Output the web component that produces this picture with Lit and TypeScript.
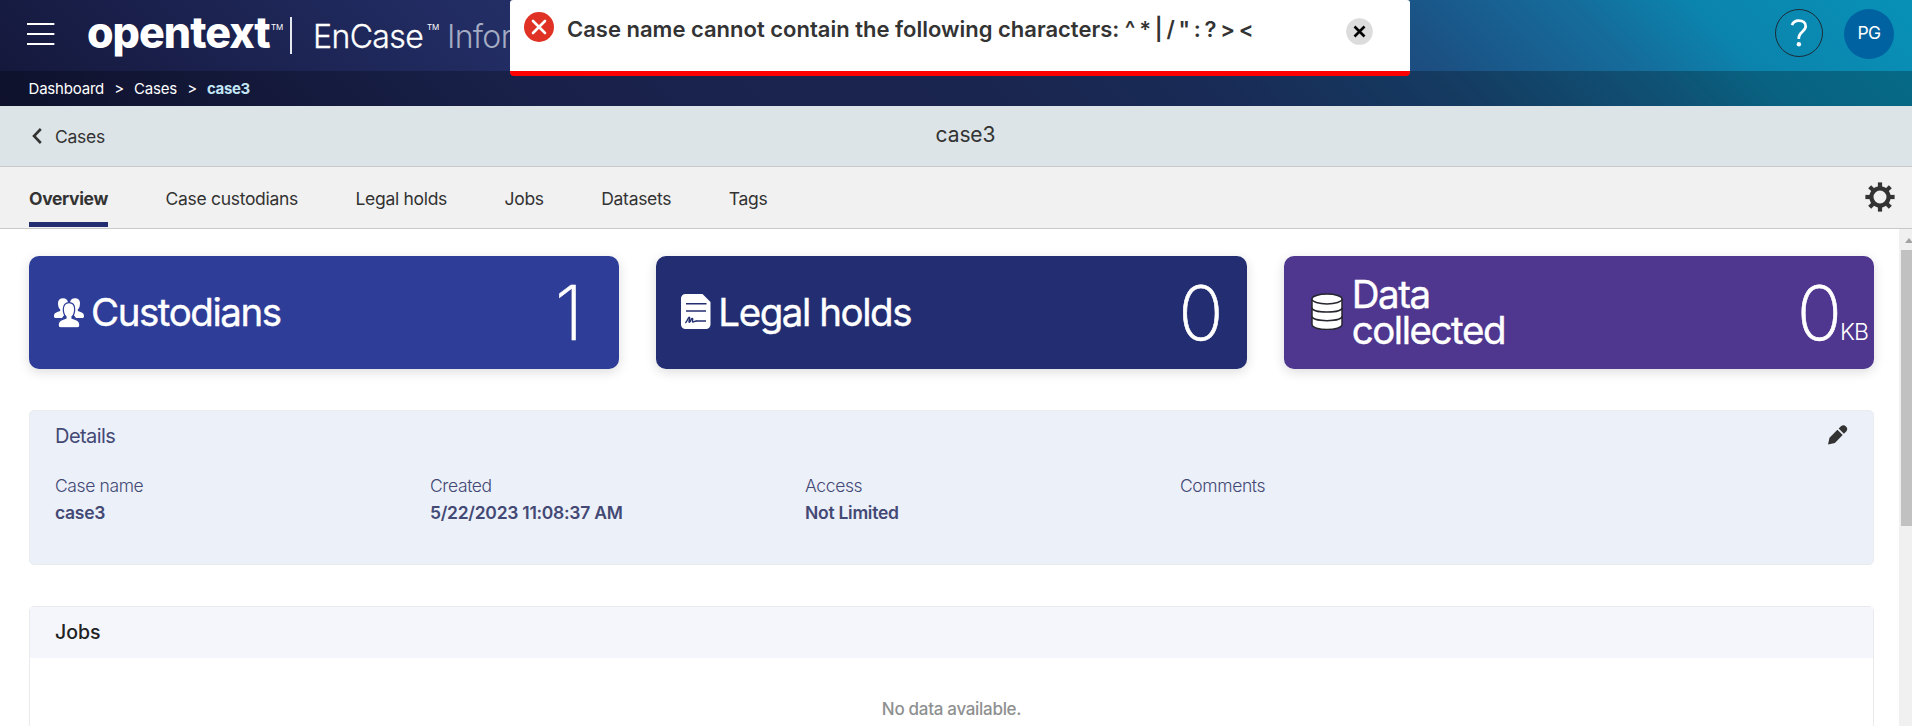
import { LitElement, html, css, svg } from "lit";
import { customElement, state } from "lit/decorators.js";
import { classMap } from "lit/directives/class-map.js";

const menuIcon = html`<svg class="menu" width="28" height="26" viewBox="0 0 28 26"><path d="M.5 3H26.5M.5 13H26.5M.5 23H26.5" stroke="#fff" stroke-width="2.2" stroke-linecap="round"/></svg>`;

const backIcon = html`<svg width="12" height="16" viewBox="0 0 12 16"><path d="M9.8 1 3 8l6.8 7" fill="none" stroke="#333" stroke-width="2.6"/></svg>`;

const gearIcon = html`<svg class="gear" width="30" height="30" viewBox="-15 -15 30 30">
  <circle r="8.6" fill="none" stroke="#333" stroke-width="4.2"/>
  ${[0, 45, 90, 135, 180, 225, 270, 315].map(
    (a) => svg`<rect x="-2.1" y="-14.6" width="4.2" height="5.6" fill="#333" transform=${`rotate(${a})`}/>`
  )}
</svg>`;

const pencilIcon = html`<svg width="20" height="20" viewBox="0 0 21 21" fill="#333">
  <path d="M0 20.5 1.6 13.4 9.9 5.1 15.4 10.6 7.2 18.9Z"/>
  <path d="M11.2 3.8 13.6 1.4A3.9 3.9 0 0 1 19.1 6.9L16.7 9.3Z"/>
</svg>`;

const peopleIcon = html`<svg class="ico" width="30" height="30" viewBox="0 0 30 30" fill="#fff">
  <path d="M4 5.2C4 2 6 .3 9 .3s5 1.7 5 4.900c0 3-1 5.300-2.300 6.400V15L8 20H1.800C.6 20 0 19.300 0 18.200 0 14.800 1.900 14.300 6.200 12.900V11.600C4.900 10.500 4 8.200 4 5.200Z"/>
  <path d="M26 5.200C26 2 24 .3 21 .3s-5 1.700-5 4.900c0 3 1 5.300 2.300 6.400V15L22 20h6.200c1.200 0 1.800-.7 1.800-1.800 0-3.400-1.900-3.900-6.200-5.300v-1.300C25.100 10.500 26 8.200 26 5.200Z"/>
  <path d="M9.300 11.300C9.300 7 11.500 4.600 15 4.600s5.700 2.400 5.700 6.700c0 3.300-1.100 6-2.700 7.400v1.400c4.700 1.400 7.900 2.400 7.900 6.900 0 1.700-.9 2.800-2.500 2.800H6.600c-1.600 0-2.500-1.100-2.500-2.800 0-4.500 3.200-5.500 7.900-6.900v-1.400C10.400 17.300 9.300 14.600 9.300 11.300Z" stroke="#2e3d98" stroke-width="1.200"/>
</svg>`;

const documentIcon = html`<svg class="ico raised" width="30" height="35" viewBox="0 0 30 35">
  <path d="M4.500 0H21.500L29.500 8V30.500a4.500 4.500 0 0 1-4.500 4.500H4.500A4.500 4.500 0 0 1 0 30.500V4.500A4.500 4.500 0 0 1 4.500 0Z" fill="#fff"/>
  <path d="M5 9.700H25.500M5 17H25M15 27H25" stroke="#232e72" stroke-width="1.500" fill="none"/>
  <path d="M4.300 28.800C6.500 27.500 6.800 23.300 8.200 23.300 9.600 23.300 7.200 28.300 8.300 28.300 9.600 28.300 9.800 24.500 11.200 24.500 12.600 24.500 10.600 28 12 28 13 28 13.500 26.900 15.500 27" stroke="#232e72" stroke-width="1.400" fill="none"/>
</svg>`;

const databaseIcon = html`<svg class="ico raised" width="32" height="37" viewBox="0 0 32 37" fill="none" stroke="#26262e" stroke-width="1.500">
  <path d="M1 6V31.500C1 38 31 38 31 31.500V6" fill="#fff"/>
  <ellipse cx="16" cy="6" rx="15" ry="4.900" fill="#fff"/>
  <path d="M1 14.700C1 20.500 31 20.500 31 14.700M1 23.300C1 29.100 31 29.100 31 23.300"/>
</svg>`;

@customElement("app-root")
export class AppRoot extends LitElement {
  @state() private tab = "Overview";
  private tabs = ["Overview", "Case custodians", "Legal holds", "Jobs", "Datasets", "Tags"];
  private cards = [
    { label: "Custodians", value: "1", unit: "", icon: peopleIcon, cls: "blue" },
    { label: "Legal holds", value: "0", unit: "", icon: documentIcon, cls: "navy" },
    { label: "Data collected", value: "0", unit: "KB", icon: databaseIcon, cls: "purple" },
  ];
  private fields = [
    ["Case name", "case3"],
    ["Created", "5/22/2023 11:08:37 AM"],
    ["Access", "Not Limited"],
    ["Comments", ""],
  ];

  static styles = css`
    :host { display: flex; flex-direction: column; position: relative; height: 726px; overflow: hidden; background: #fff; color: #333; font-family: Inter, "Liberation Sans", sans-serif; font-size: 17.5px; letter-spacing: -0.25px; }
    * { box-sizing: border-box; }
    svg { display: block; flex: none; }
    .header { flex: none; height: 106px; background: linear-gradient(45deg, #14173a 0%, #222d64 28%, #23326a 50%, #203b74 62%, #1c4f82 73%, #156c9b 83%, #0b84ad 89%, #0891b7 100%); color: #fff; }
    .bar { height: 71px; display: flex; align-items: center; padding: 0 18px 0 27px; }
    .menu { margin-top: -4px; }
    .logo { margin-left: 32px; width: 184px; font-weight: 800; font-size: 43px; letter-spacing: -1px; line-height: 50px; margin-top: -7px; }
    .tm { font-size: 8px; letter-spacing: -0.2px; align-self: flex-start; margin-top: 21px; line-height: 12px; width: 10px; }
    .rule { width: 2px; height: 37px; background: #e6e8ef; margin: 0 0 0 9px; }
    .product { font-size: 32px; font-weight: 300; letter-spacing: -0.6px; line-height: 40px; margin: 2px 0 0 21px; width: 114px; -webkit-text-stroke: 0.3px #fff; }
    .product-rest { color: #a4abc2; font-size: 32px; font-weight: 300; letter-spacing: -0.7px; line-height: 40px; margin: 2px 0 0 10px; }
    .spacer { flex: 1; }
    .help { width: 48px; height: 48px; border: 1px solid #1c2b36; border-radius: 50%; margin-top: -5px; display: grid; place-items: center; }
    .avatar { width: 50px; height: 50px; border-radius: 50%; background: #0062a0; margin: -3px 0 0 21px; display: grid; place-items: center; letter-spacing: -0.6px; padding-bottom: 3px; }
    .crumbs { height: 35px; background: rgba(0, 0, 0, 0.25); display: flex; align-items: center; padding: 0 0 1px 28.5px; font-size: 15px; letter-spacing: -0.2px; }
    .crumbs .sep { width: 30px; text-align: center; }
    .crumbs .here { font-weight: 700; color: #c3e6f5; letter-spacing: -0.4px; }
    .title { flex: none; height: 61px; background: #dce4e7; border-bottom: 1px solid #c8caca; display: grid; grid-template-columns: 1fr auto 1fr; align-items: center; padding: 0 10px 0 31px; }
    .back { display: flex; gap: 12px; align-items: center; }
    .name { font-size: 21px; letter-spacing: -0.1px; margin-top: -3px; margin-left: -2px; }
    .tabs { flex: none; height: 62px; background: #f1f1f1; border-bottom: 1px solid #c8caca; display: flex; gap: 57.5px; padding: 0 17px 0 29px; }
    .gear { margin-top: 15px; }
    .tab { height: 60px; line-height: 64px; border-bottom: 5px solid transparent; white-space: nowrap; letter-spacing: -0.3px; }
    .tab.active { font-weight: 700; border-color: #232e72; letter-spacing: -0.35px; }
    .body { flex: 1; min-height: 0; display: flex; }
    .content { flex: 1; padding: 27px 25px 0 29px; overflow: hidden; display: flex; flex-direction: column; }
    .cards { flex: none; display: grid; grid-template-columns: repeat(3, 1fr); gap: 37px; height: 113px; color: #fff; }
    .card { display: flex; align-items: center; border-radius: 10px; padding: 0 28px 0 25px; box-shadow: 0 3px 12px rgba(0, 0, 0, 0.14); }
    .raised { margin-bottom: 3px; }
    .blue { background: #2e3d98; padding-right: 38px; }
    .navy { background: #232e72; padding-right: 25px; }
    .purple { background: #4f368f; padding: 0 6px 0 27px; }
    .label { font-size: 38.5px; -webkit-text-stroke: 0.4px #fff; line-height: 36px; letter-spacing: -1.45px; margin: -2px 0 0 7px; width: 205px; }
    .purple .label { width: 170px; margin-left: 9px; }
    .num { margin-left: auto; font-size: 75px; font-weight: 200; -webkit-text-stroke: 0.6px #fff; line-height: 80px; display: flex; align-items: baseline; letter-spacing: -2px; }
    .unit { font-size: 23px; font-weight: 300; letter-spacing: -0.9px; line-height: 23px; -webkit-text-stroke: 0; }
    .details { flex: none; margin-top: 41px; height: 155px; background: #ecf0f9; border: 1px solid #e9ebee; border-radius: 5px; padding: 12px 24px 0 25px; color: #434974; }
    .dhead { display: flex; justify-content: space-between; align-items: flex-start; font-size: 20px; letter-spacing: -0.55px; line-height: 26px; }
    .dhead svg { margin: 2px 1px 0 0; }
    .fields { display: grid; grid-template-columns: repeat(4, 375px); margin-top: 23px; line-height: 27px; }
    .k { font-weight: 300; letter-spacing: -0.38px; }
    .v { font-weight: 600; letter-spacing: -0.27px; }
    .jobs { flex: none; margin-top: 41px; height: 200px; border: 1px solid #e9eaec; border-radius: 5px; }
    .jhead { height: 51px; line-height: 51px; background: #f5f6fb; padding-left: 25px; font-size: 19.5px; font-weight: 500; color: #222; letter-spacing: 0; }
    .empty { text-align: center; margin-top: 40px; line-height: 22px; color: #8e9090; font-weight: 500; font-size: 17px; letter-spacing: -0.3px; }
    .scroll { flex: none; width: 13px; background: #f0f0f0; padding: 9px 0 0 2px; overflow: hidden; }
    .scroll svg { margin: 0 0 7px 4px; }
    .thumb { width: 11px; height: 276px; background: #c1c1c1; }
    .toast { position: absolute; left: 510px; top: 0; width: 900px; height: 76px; background: #fff; border-bottom: 5px solid #f00; border-radius: 3px 3px 4px 4px; display: flex; align-items: flex-start; padding: 12px 37px 0 14px; }
    .toast .msg { margin: 2px 0 0 13px; flex: 1; font-size: 22px; font-weight: 600; line-height: 30px; letter-spacing: 0; white-space: nowrap; }
    .toast .chars { letter-spacing: -0.9px; }
    .toast .close { margin-top: 6px; }
  `;

  render() {
    return html`
      <div class="header">
        <div class="bar">
          ${menuIcon}
          <div class="logo">opentext</div>
          <div class="tm">TM</div>
          <div class="rule"></div>
          <div class="product">EnCase</div>
          <div class="tm">TM</div>
          <div class="product-rest">Infor</div>
          <div class="spacer"></div>
          <div class="help">
            <svg width="18" height="28" viewBox="0 0 18 28"><path d="M2 6.200C3 3 5.500 1.600 8.800 1.600c4.200 0 6.900 2.200 6.900 5.600 0 5.300-6.900 5.700-6.900 11.400V20" fill="none" stroke="#fff" stroke-width="2.700"/><circle cx="8.900" cy="25.300" r="2.200" fill="#fff"/></svg>
          </div>
          <div class="avatar">PG</div>
        </div>
        <div class="crumbs">
          <span>Dashboard</span><span class="sep">&gt;</span><span>Cases</span><span class="sep">&gt;</span><span class="here">case3</span>
        </div>
      </div>
      <div class="title">
        <div class="back">${backIcon}<span>Cases</span></div>
        <div class="name">case3</div>
      </div>
      <div class="tabs">
        ${this.tabs.map(
          (t) => html`<div class=${classMap({ tab: true, active: t === this.tab })} @click=${() => (this.tab = t)}>${t}</div>`
        )}
        <div class="spacer"></div>
        ${gearIcon}
      </div>
      <div class="body">
        <div class="content">
          <div class="cards">
            ${this.cards.map(
              (c) => html`<div class="card ${c.cls}">
                ${c.icon}
                <div class="label">${c.label}</div>
                <div class="num">${c.value}${c.unit ? html`<span class="unit">${c.unit}</span>` : ""}</div>
              </div>`
            )}
          </div>
          <div class="details">
            <div class="dhead"><span>Details</span>${pencilIcon}</div>
            <div class="fields">
              ${this.fields.map(([k, v]) => html`<div><div class="k">${k}</div><div class="v">${v}</div></div>`)}
            </div>
          </div>
          <div class="jobs">
            <div class="jhead">Jobs</div>
            <div class="empty">No data available.</div>
          </div>
        </div>
        <div class="scroll">
          <svg width="8" height="5" viewBox="0 0 8 5"><path d="M0 5 4 0 8 5Z" fill="#a3a3a3"/></svg>
          <div class="thumb"></div>
        </div>
      </div>
      <div class="toast">
        <svg width="30" height="30" viewBox="0 0 30 30"><circle cx="15" cy="15" r="15" fill="#e03224"/><path d="M9 9 21 21M21 9 9 21" stroke="#fff" stroke-width="2.600" stroke-linecap="round"/></svg>
        <div class="msg">Case name cannot contain the following characters: <span class="chars">^ * | / " : ? &gt; &lt;</span></div>
        <svg class="close" width="27" height="27" viewBox="0 0 27 27"><circle cx="13.500" cy="13.500" r="13.300" fill="#dcdcdc"/><path d="M8.500 8.500 18.500 18.500M18.500 8.500 8.500 18.500" stroke="#000" stroke-width="2.600"/></svg>
      </div>
    `;
  }
}
